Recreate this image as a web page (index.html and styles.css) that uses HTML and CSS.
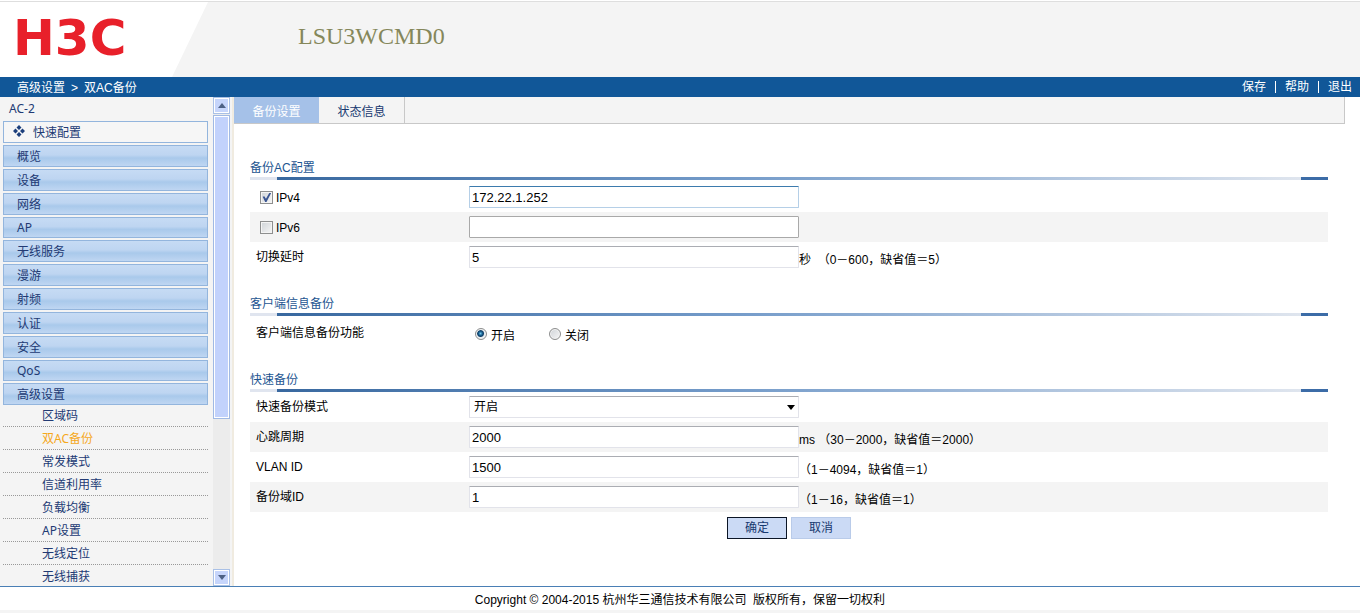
FILE: index.html
```html
<!DOCTYPE html>
<html lang="zh-CN">

<head>
  <meta charset="UTF-8">
  <meta name="viewport" content="width=device-width, initial-scale=1.0">
  <title>LSU3WCMD0</title>
  <link rel="stylesheet" href="styles.css">
</head>

<body>

  <header class="header">
    <div class="logo">H3C</div>
    <h1 class="device">LSU3WCMD0</h1>
  </header>

  <div class="topbar">
    <div class="breadcrumb">
      <span>高级设置</span>
      <span>&gt;</span>
      <span>双AC备份</span>
    </div>
    <div class="top-links">
      <a href="#">保存</a>
      <span class="divider"></span>
      <a href="#">帮助</a>
      <span class="divider"></span>
      <a href="#">退出</a>
    </div>
  </div>

  <div class="main">
    <div class="sidebar">
      <nav class="nav">
        <div class="nav-title">AC-2</div>
        <a class="nav-item quick" href="#">
          <svg class="quick-icon" width="12" height="12" viewBox="0 0 12 12">
            <path d="M6 0l2.5 2.5L6 5 3.500 2.500zM6 7l2.500 2.500L6 12 3.500 9.500zM2.500 3.500L5 6 2.500 8.500 0 6zM9.500 3.500L12 6 9.500 8.500 7 6z" fill="#1c3f7c" />
          </svg>
          快速配置
        </a>
        <a class="nav-item" href="#">概览</a>
        <a class="nav-item" href="#">设备</a>
        <a class="nav-item" href="#">网络</a>
        <a class="nav-item latin" href="#">AP</a>
        <a class="nav-item" href="#">无线服务</a>
        <a class="nav-item" href="#">漫游</a>
        <a class="nav-item" href="#">射频</a>
        <a class="nav-item" href="#">认证</a>
        <a class="nav-item" href="#">安全</a>
        <a class="nav-item latin" href="#">QoS</a>
        <a class="nav-item" href="#">高级设置</a>
        <div class="subnav">
          <a href="#">区域码</a>
          <a class="current" href="#">双AC备份</a>
          <a href="#">常发模式</a>
          <a href="#">信道利用率</a>
          <a href="#">负载均衡</a>
          <a href="#">AP设置</a>
          <a href="#">无线定位</a>
          <a href="#">无线捕获</a>
        </div>
      </nav>
      <div class="scrollbar">
        <button class="scroll-btn" type="button" aria-label="向上">
          <svg width="8" height="5" viewBox="0 0 8 5"><path d="M4 0l4 5H0z" fill="#4d6185" /></svg>
        </button>
        <div class="track">
          <div class="thumb"></div>
        </div>
        <button class="scroll-btn" type="button" aria-label="向下">
          <svg width="8" height="5" viewBox="0 0 8 5"><path d="M0 0h8L4 5z" fill="#4d6185" /></svg>
        </button>
      </div>
    </div>

    <div class="content">
      <div class="tabs">
        <a class="tab active" href="#">备份设置</a>
        <a class="tab" href="#">状态信息</a>
      </div>

      <form class="form">
        <section>
          <h2>备份AC配置</h2>
          <div class="rule"></div>
          <table>
            <tr>
              <th class="check-cell"><input type="checkbox" id="ipv4" checked><label for="ipv4">IPv4</label></th>
              <td><input class="field focused" type="text" value="172.22.1.252" aria-label="IPv4"></td>
            </tr>
            <tr>
              <th class="check-cell"><input type="checkbox" id="ipv6"><label for="ipv6">IPv6</label></th>
              <td><input class="field plain" type="text" aria-label="IPv6"></td>
            </tr>
            <tr>
              <th><label for="delay">切换延时</label></th>
              <td>
                <div class="row">
                  <input class="field" id="delay" type="text" value="5">
                  <span class="hint">秒&nbsp; （0－600，缺省值＝5）</span>
                </div>
              </td>
            </tr>
          </table>
        </section>

        <section>
          <h2>客户端信息备份</h2>
          <div class="rule"></div>
          <table>
            <tr>
              <th>客户端信息备份功能</th>
              <td>
                <div class="row radios">
                  <span class="radio"><input type="radio" name="client" id="client-on" checked><label for="client-on">开启</label></span>
                  <span class="radio"><input type="radio" name="client" id="client-off"><label for="client-off">关闭</label></span>
                </div>
              </td>
            </tr>
          </table>
        </section>

        <section>
          <h2>快速备份</h2>
          <div class="rule tight"></div>
          <table>
            <tr>
              <th><label for="mode">快速备份模式</label></th>
              <td>
                <div class="select">
                  <select class="field" id="mode">
                    <option>开启</option>
                    <option>关闭</option>
                  </select>
                </div>
              </td>
            </tr>
            <tr>
              <th><label for="heartbeat">心跳周期</label></th>
              <td>
                <div class="row">
                  <input class="field" id="heartbeat" type="text" value="2000">
                  <span class="hint">ms （30－2000，缺省值＝2000）</span>
                </div>
              </td>
            </tr>
            <tr>
              <th><label for="vlan">VLAN ID</label></th>
              <td>
                <div class="row">
                  <input class="field" id="vlan" type="text" value="1500">
                  <span class="hint">（1－4094，缺省值＝1）</span>
                </div>
              </td>
            </tr>
            <tr>
              <th><label for="domain">备份域ID</label></th>
              <td>
                <div class="row">
                  <input class="field" id="domain" type="text" value="1">
                  <span class="hint">（1－16，缺省值＝1）</span>
                </div>
              </td>
            </tr>
          </table>
        </section>

        <div class="actions">
          <button class="btn primary" type="button">确定</button>
          <button class="btn" type="button">取消</button>
        </div>
      </form>
    </div>
  </div>

  <footer class="footer">Copyright © 2004-2015 杭州华三通信技术有限公司&nbsp; 版权所有，保留一切权利</footer>

</body>

</html>
```
FILE: styles.css
```css
* {
  box-sizing: border-box;
}

body {
  display: flex;
  flex-direction: column;
  height: 100vh;
  margin: 0;
  padding-bottom: 3px;
  background-color: #f4f4f4;
  color: #000;
  font-family: "Liberation Sans", "Noto Sans CJK SC", sans-serif;
  font-size: 12px;
  line-height: 18px;
}

a {
  color: inherit;
  text-decoration: none;
}

/* header */

.header {
  display: flex;
  flex: 0 0 77px;
  border-top: 1px solid #fff;
  box-shadow: inset 0 1px #dedede;
}

.logo {
  flex: 0 0 208px;
  padding-left: 13px;
  background-color: #fff;
  clip-path: polygon(0 1px, 100% 1px, 172px 100%, 0 100%);
  color: #e8202a;
  font: bold 50px/74px "DejaVu Sans", sans-serif;
}

.device {
  margin: 0 0 0 90px;
  color: #85875a;
  font: 24px/70px "Liberation Serif", serif;
}

.topbar {
  display: flex;
  flex: 0 0 20px;
  align-items: center;
  justify-content: space-between;
  padding: 0 8px 0 17px;
  background-color: #115798;
  color: #fff;
}

.breadcrumb {
  display: flex;
  gap: 6px;
  padding-top: 2px;
}

.top-links {
  display: flex;
  align-items: center;
  gap: 9px;
}

.divider {
  width: 1px;
  height: 12px;
  background-color: #fff;
}

.main {
  display: flex;
  flex: 1 1 0;
  min-height: 0;
  background-color: #fff;
}

/* sidebar */

.sidebar {
  display: flex;
  flex: 0 0 234px;
  border-right: 2px solid #f0ebe0;
  background-color: #f4f4f4;
  color: #223a74;
  font-family: "Noto Sans", "Noto Sans CJK SC", sans-serif;
}

.nav {
  flex: 1 1 auto;
  padding: 0 5px 0 3px;
  overflow: hidden;
}

.nav-title {
  height: 24px;
  padding-left: 6px;
  line-height: 23px;
}

.nav-item {
  display: block;
  height: 22px;
  margin-bottom: 2px;
  padding-left: 13px;
  border: 1px solid #93b5dd;
  background-image: linear-gradient(#c6dbf4, #bed5f1 45%, #a9c9eb 60%, #bfd6f2);
  line-height: 22px;
}

.nav-item.latin {
  height: 21px;
  line-height: 19px;
}

.nav-item.quick {
  padding-left: 9px;
  background: #f6f6f6;
}

.quick-icon {
  margin-right: 5px;
}

.subnav {
  margin-top: -3px;
}

.subnav a {
  display: block;
  height: 23px;
  padding-left: 39px;
  border-bottom: 1px dotted #999;
  line-height: 24px;
}

.subnav .current {
  color: #f5a81c;
}

.scrollbar {
  display: flex;
  flex: 0 0 17px;
  flex-direction: column;
  margin-right: 2px;
  background-color: #ececec;
}

.scroll-btn {
  display: flex;
  flex: 0 0 17px;
  align-items: center;
  justify-content: center;
  padding: 0;
  border: 1px solid #a9c0e6;
  background-color: #c6d5fb;
  box-shadow: inset 0 0 0 1px #fff;
}

.track {
  flex: 1 1 auto;
  padding-top: 1px;
}

.thumb {
  height: 67%;
  border: 1px solid #a0b9e4;
  background-color: #c2d2fc;
  box-shadow: inset 0 0 0 1px #fff;
}

/* content */

.content {
  flex: 1 1 auto;
}

.tabs {
  display: flex;
  height: 27px;
  margin-right: 15px;
  border: 1px solid #c8c8c8;
  border-width: 0 1px 1px 0;
  background-color: #f4f4f4;
}

.tab {
  width: 86px;
  border-right: 1px solid #c8c8c8;
  color: #17386f;
  line-height: 30px;
  text-align: center;
}

.tab.active {
  width: 85px;
  border: 0;
  background-color: #a5c1e8;
  color: #fff;
}

.form {
  padding: 34px 32px 0 16px;
}

section {
  margin-bottom: 22px;
}

h2 {
  height: 19px;
  margin: 0;
  color: #1d5591;
  font-size: 12px;
  font-weight: normal;
  line-height: 21px;
}

.rule {
  height: 3px;
  margin-bottom: 2px;
  border: solid #e0e5ef;
  border-width: 0 27px;
  border-right-color: #3c6ca7;
  background-image: linear-gradient(90deg, #38689f, #759cca 45%, #dfe5ee);
}

.rule.tight {
  margin-bottom: 0;
}

table {
  width: 100%;
  border-collapse: collapse;
}

tr {
  height: 30px;
}

tr:nth-child(even) {
  background-color: #f4f4f4;
}

th {
  width: 219px;
  padding: 0 0 0 6px;
  font-weight: normal;
  text-align: left;
}

td {
  padding: 0;
}

.check-cell {
  padding-left: 10px;
}

.check-cell label {
  vertical-align: middle;
}

.row {
  display: flex;
  align-items: center;
}

.hint {
  padding-top: 5px;
}

.field {
  display: block;
  width: 330px;
  height: 22px;
  padding: 0 2px;
  border: 1px solid #e2e3ea;
  border-top-color: #abadb3;
  border-radius: 1px;
  background-color: #fff;
  color: #000;
  font-family: inherit;
  font-size: 13px;
}

.field.focused {
  border-color: #b5cfe7;
  border-top-color: #3d7bad;
}

.field.plain {
  border-color: #a9a9a9;
}

select.field {
  padding-left: 4px;
  appearance: none;
  font-size: 12px;
}

.select {
  position: relative;
  width: 330px;
}

.select::after {
  content: "";
  position: absolute;
  top: 9px;
  right: 4px;
  border: solid transparent;
  border-width: 5px 4px 0;
  border-top-color: #000;
  pointer-events: none;
}

input[type=checkbox] {
  appearance: none;
  width: 13px;
  height: 13px;
  margin: 0 3px 0 0;
  border: 1px solid #8e8f8f;
  background-image: linear-gradient(135deg, #cfd3d7, #f6f6f6);
  box-shadow: inset 0 0 0 1px #f4f4f4;
  vertical-align: middle;
}

input[type=checkbox]:checked::before {
  content: "";
  display: block;
  height: 11px;
  background-color: #3a5592;
  clip-path: polygon(15% 45%, 30% 40%, 45% 62%, 75% 10%, 92% 10%, 50% 92%, 38% 92%);
}

.radios {
  gap: 34px;
  padding-left: 6px;
}

.radio {
  display: flex;
  align-items: center;
}

.radio label {
  padding-top: 5px;
}

input[type=radio] {
  appearance: none;
  width: 12px;
  height: 12px;
  margin: 2px 4px 0 0;
  border: 1px solid #8e8f8f;
  border-radius: 50%;
  background-image: linear-gradient(135deg, #cfd3d7, #f6f6f6);
  box-shadow: inset 0 0 0 1px #f4f4f4;
}

input[type=radio]:checked {
  background-image: radial-gradient(circle at 45% 45%, #6fc4ea 0, #155a8a 2px, #123f66 3px, #e4ebf0 4px);
}

.actions {
  display: flex;
  justify-content: center;
  gap: 4px;
  margin-top: -17px;
}

.btn {
  width: 60px;
  height: 22px;
  padding: 0;
  border: 1px solid #b9cbe9;
  background-color: #cbdaf5;
  color: #17386f;
  font: inherit;
}

.btn.primary {
  border-color: #0b1526;
}

.footer {
  flex: 0 0 24px;
  padding-top: 3px;
  border-top: 1px solid #4a7fb5;
  background-color: #fff;
  line-height: 20px;
  text-align: center;
}
```
